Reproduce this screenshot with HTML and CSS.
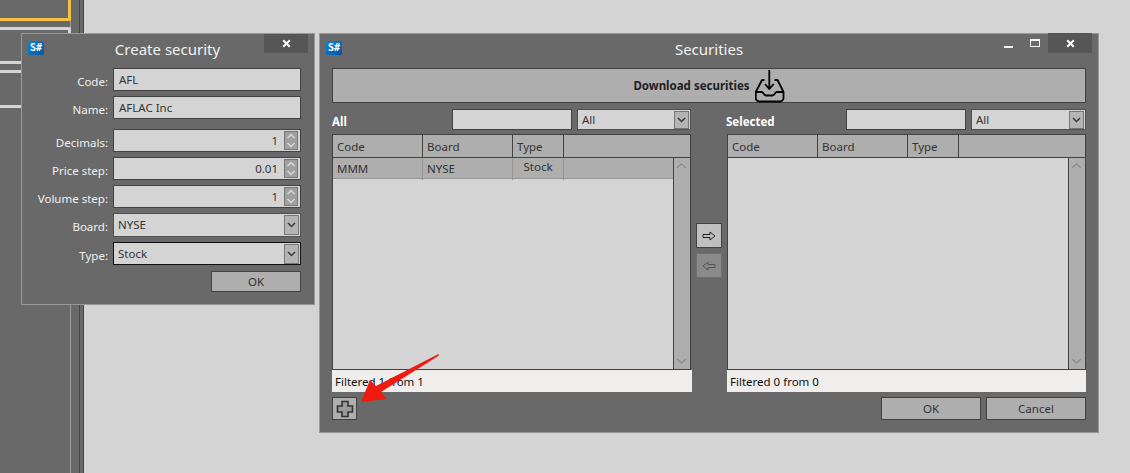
FILE: index.html
```html
<!DOCTYPE html>
<html lang="en">
<head>
<meta charset="utf-8">
<title>Securities</title>
<link rel="stylesheet" href="styles.css">
</head>
<body>
<div class="desktop">
  <aside class="sidebar">
    <div class="node node-active"></div>
    <div class="node node-plain"></div>
    <div class="wire wire-a"></div>
    <div class="wire wire-b"></div>
    <div class="wire wire-c"></div>
  </aside>

  <section class="window create">
    <header class="titlebar">
      <span class="appicon">S#</span>
      <h1 class="title">Create security</h1>
      <span class="winbtn close-small"><svg width="9" height="9" viewBox="0 0 9 9"><path d="M1.200 1.200 7.800 7.800M7.800 1.200 1.200 7.800"/></svg></span>
    </header>
    <div class="form">
      <div class="frow"><label>Code:</label><div class="field text">AFL</div></div>
      <div class="frow"><label>Name:</label><div class="field text">AFLAC Inc</div></div>
      <div class="frow gap-top"><label>Decimals:</label><div class="field num"><span>1</span><span class="spin"><svg width="12" height="17" viewBox="0 0 12 17"><path class="chev" d="M2.500 6 6 2.500 9.500 6M2.500 11 6 14.500 9.500 11"/></svg></span></div></div>
      <div class="frow"><label>Price step:</label><div class="field num"><span>0.01</span><span class="spin"><svg width="12" height="17" viewBox="0 0 12 17"><path class="chev" d="M2.500 6 6 2.500 9.500 6M2.500 11 6 14.500 9.500 11"/></svg></span></div></div>
      <div class="frow"><label>Volume step:</label><div class="field num"><span>1</span><span class="spin"><svg width="12" height="17" viewBox="0 0 12 17"><path class="chev" d="M2.500 6 6 2.500 9.500 6M2.500 11 6 14.500 9.500 11"/></svg></span></div></div>
      <div class="frow tall"><label>Board:</label><div class="field combo"><span>NYSE</span><span class="drop"><svg width="11" height="8" viewBox="0 0 11 8"><path class="chev" d="M2 2 5.500 5.500 9 2"/></svg></span></div></div>
      <div class="frow"><label>Type:</label><div class="field combo focused"><span>Stock</span><span class="drop"><svg width="11" height="8" viewBox="0 0 11 8"><path class="chev" d="M2 2 5.500 5.500 9 2"/></svg></span></div></div>
      <div class="form-actions"><button class="btn btn-form">OK</button></div>
    </div>
  </section>

  <section class="window securities">
    <header class="titlebar">
      <span class="appicon">S#</span>
      <h1 class="title">Securities</h1>
      <div class="controls">
        <span class="ctl"><i class="min"></i></span>
        <span class="ctl"><i class="max"></i></span>
        <span class="winbtn close-large"><svg width="9" height="9" viewBox="0 0 9 9"><path d="M1.200 1.200 7.800 7.800M7.800 1.200 1.200 7.800"/></svg></span>
      </div>
    </header>
    <div class="content">
      <button class="download">
        <b>Download securities</b>
        <svg class="inbox" width="30" height="34" viewBox="0 0 30 34"><path d="M9.500 11H7L.8 23v6a3.500 3.500 0 0 0 3.500 3.500H25a3.500 3.500 0 0 0 3.500-3.500V23L22.500 11H19.500M.8 23H7c1 0 2 3.500 4 3.500h6.500c2 0 3-3.500 4-3.500h7M14.300 1v19M10 15l4.300 5 4.400-5"/></svg>
      </button>
      <div class="panes">
        <div class="pane">
          <div class="filter">
            <strong>All</strong>
            <div class="field search"></div>
            <div class="field combo small"><span>All</span><span class="drop"><svg width="11" height="8" viewBox="0 0 11 8"><path class="chev" d="M2 2 5.500 5.500 9 2"/></svg></span></div>
          </div>
          <div class="table">
            <div class="thead"><span>Code</span><span>Board</span><span>Type</span><span></span></div>
            <div class="tbody">
              <div class="rows">
                <div class="trow"><span>MMM</span><span>NYSE</span><span class="type">Stock</span><span></span></div>
              </div>
              <div class="scroll"><svg width="17" height="10" viewBox="0 0 17 10"><path class="chev faint" d="M4 7 8.500 3 13 7"/></svg><svg width="17" height="10" viewBox="0 0 17 10"><path class="chev faint" d="M4 3 8.500 7 13 3"/></svg></div>
            </div>
          </div>
          <div class="status">Filtered 1 from 1</div>
          <div class="pane-foot">
            <button class="btn plus"><svg width="18" height="18" viewBox="0 0 18 18"><path d="M6 1.500h6v4.500h4.500v6H12v4.500H6V12H1.500V6H6Z"/></svg></button>
          </div>
        </div>

        <div class="movers">
          <button class="btn move"><svg width="14" height="10" viewBox="0 0 14 10"><path d="M1 3.500h7V1l5 4-5 4V6.500H1Z"/></svg></button>
          <button class="btn move off"><svg width="14" height="10" viewBox="0 0 14 10"><path d="M13 3.500H6V1L1 5l5 4V6.500h7Z"/></svg></button>
        </div>

        <div class="pane pane-right">
          <div class="filter">
            <strong>Selected</strong>
            <div class="field search"></div>
            <div class="field combo small"><span>All</span><span class="drop"><svg width="11" height="8" viewBox="0 0 11 8"><path class="chev" d="M2 2 5.500 5.500 9 2"/></svg></span></div>
          </div>
          <div class="table">
            <div class="thead"><span>Code</span><span>Board</span><span>Type</span><span></span></div>
            <div class="tbody">
              <div class="rows"></div>
              <div class="scroll"><svg width="17" height="10" viewBox="0 0 17 10"><path class="chev faint" d="M4 7 8.500 3 13 7"/></svg><svg width="17" height="10" viewBox="0 0 17 10"><path class="chev faint" d="M4 3 8.500 7 13 3"/></svg></div>
            </div>
          </div>
          <div class="status">Filtered 0 from 0</div>
          <div class="pane-foot end">
            <button class="btn wide">OK</button>
            <button class="btn wide">Cancel</button>
          </div>
        </div>
      </div>
    </div>
  </section>

  <svg class="pointer" width="1130" height="473" viewBox="0 0 1130 473"><polygon points="438.500,354 439,355.500 381,392 386.700,399 361,402 370,380 376,386"/></svg>
</div>
</body>
</html>
```

FILE: styles.css
```css
* { box-sizing: border-box; }
html, body { margin: 0; height: 100%; overflow: hidden; }
body { font: 11.5px "Noto Sans", "Open Sans", sans-serif; color: #333; background: #d4d4d4; }
.desktop { position: relative; width: 1130px; height: 473px; }

.sidebar {
  position: relative;
  width: 84px;
  height: 473px;
  background: #696969;
}
.sidebar::before, .sidebar::after { content: ""; position: absolute; top: 0; bottom: 0; }
.sidebar::before { left: 70px; width: 8px; border-left: 1px solid #9b9b9b; border-right: 1px solid #474747; }
.sidebar::after { left: 83px; width: 1px; background: #474747; }
.node { position: absolute; left: 0; width: 71px; z-index: 1; background: #696969; }
.node-active { top: 0; height: 21px; border: solid #f5c244; border-width: 0 3px 3px 0; border-bottom-right-radius: 2px; }
.node-plain { top: 27px; height: 30px; border: solid #d4d4d4; border-width: 3px 3px 0 0; border-top-right-radius: 2px; }
.wire { position: absolute; left: 0; width: 22px; height: 3px; background: #d4d4d4; z-index: 1; }
.wire-a { top: 61px; }
.wire-b { top: 70px; }
.wire-c { top: 105px; }

.window {
  position: absolute;
  z-index: 2;
  background: #696969;
  border: 1px solid #999;
  display: flex;
  flex-direction: column;
}
.create { left: 21px; top: 33px; width: 294px; height: 272px; }
.securities { left: 319px; top: 33px; width: 780px; height: 400px; }

.titlebar { position: relative; height: 34px; flex: none; }
.title {
  margin: 0;
  text-align: center;
  font-size: 15px;
  font-weight: 400;
  line-height: 30px;
  color: #f2f2f2;
}
.create .title { padding-right: 1px; }
.appicon {
  position: absolute;
  left: 6px;
  top: 7px;
  width: 16px;
  height: 14px;
  border-radius: 2px;
  background: linear-gradient(135deg, #0a8ad8, #0c4f9c);
  color: #fff;
  font: 700 10px/14px "DejaVu Sans Mono", monospace;
  text-align: center;
}
.winbtn {
  position: absolute;
  top: 0;
  width: 44px;
  height: 19px;
  background: #565656;
  display: flex;
  align-items: center;
  justify-content: center;
}
.winbtn path { fill: none; stroke: #fff; stroke-width: 2; }
.close-small { left: 242px; }
.controls { position: absolute; inset: 0; }
.close-large { left: 728px; height: 20px; top: -1px; }
.ctl { position: absolute; display: block; }
.ctl:nth-child(1) { left: 684px; top: 12px; }
.ctl:nth-child(2) { left: 710px; top: 5px; }
.min { display: block; width: 9px; height: 2px; background: #f4f4f4; }
.max { display: block; width: 10px; height: 8px; background: #696969; border: 1px solid #f4f4f4; border-top-width: 2px; }

.form { display: flex; flex-direction: column; gap: 5px; padding-left: 91px; }
.frow { position: relative; height: 23px; width: 188px; }
.frow.tall { height: 24px; }
.frow.gap-top { margin-top: 5px; }
.frow label {
  position: absolute;
  right: 193px;
  top: 4px;
  white-space: nowrap;
  color: #f0f0f0;
  line-height: 20px;
}

.field {
  height: 100%;
  background: #d4d4d4;
  border: 1px solid #424242;
  color: #333;
  display: flex;
  align-items: center;
  line-height: 18px;
}
.field.text { padding-left: 5px; }
.field.num { justify-content: flex-end; padding-right: 2px; gap: 6px; }
.field.combo { justify-content: space-between; padding: 0 1px 0 4px; border-color: #505050; }
.field.focused { border-color: #111; }
.spin {
  display: flex;
  align-items: center;
  justify-content: center;
  width: 14px;
  height: 19px;
  background: #a0a0a0;
  border: 1px solid #777;
}
.drop {
  display: flex;
  align-items: center;
  justify-content: center;
  width: 15px;
  height: 20px;
  background: #b4b4b4;
  border: 1px solid #777;
}
.chev { fill: none; stroke: #3a3a3a; stroke-width: 1.500; }
.chev.faint { stroke: #8e8e8e; }
.spin .chev { stroke: #d8d8d8; }

.form-actions { display: flex; justify-content: flex-end; margin-top: 1px; width: 188px; }
.btn {
  font: inherit;
  color: #333;
  background: #aeaeae;
  border: 1px solid #424242;
  padding: 0;
  display: flex;
  align-items: center;
  justify-content: center;
}
.btn-form { width: 90px; height: 21px; }

.content { padding: 0 12px; display: flex; flex-direction: column; }
.download {
  height: 35px;
  width: 754px;
  font: inherit;
  color: #222;
  background: #aeaeae;
  border: 1px solid #424242;
  display: flex;
  align-items: center;
  justify-content: center;
  gap: 5px;
  padding: 0;
}
.inbox { fill: none; stroke: #000; stroke-width: 1.800; stroke-linejoin: round; }
.panes { display: flex; margin-top: 6px; }
.pane { width: 360px; flex: none; display: flex; flex-direction: column; }
.pane-right { width: 359px; }
.movers { width: 35px; flex: none; padding: 114px 0 0 4px; display: flex; flex-direction: column; gap: 5px; }

.filter { display: flex; width: 359px; height: 21px; align-items: stretch; }
.filter strong { flex: 1; color: #fff; line-height: 25px; font-size: 11.5px; }
.pane-right .filter strong { margin-left: -1px; }
.field.search { width: 120px; flex: none; }
.field.small { width: 114px; flex: none; margin-left: 5px; }
.pane-right .field.small { width: 115px; }
.small .drop { height: 18px; }

.table {
  margin-top: 4px;
  width: 359px;
  height: 236px;
  border: 1px solid #424242;
  display: flex;
  flex-direction: column;
  background: #d4d4d4;
}
.thead, .trow { display: grid; grid-template-columns: 90px 90px 51px 1fr; }
.thead { height: 23px; flex: none; background: #aeaeae; border-bottom: 1px solid #424242; }
.thead span { border-right: 1px solid #424242; padding-left: 4px; line-height: 23px; }
.thead span:last-child { border-right: 0; }
.tbody { flex: 1; display: flex; min-height: 0; }
.rows { flex: 1; }
.trow { height: 21px; background: #aeaeae; border-bottom: 1px solid #969696; }
.trow span { border-right: 1px solid #969696; padding-left: 4px; line-height: 22px; }
.trow span:last-child { border-right: 0; }
.trow .type { padding-left: 0; text-align: center; line-height: 18px; }
.scroll {
  width: 17px;
  flex: none;
  background: #aeaeae;
  border-left: 1px solid #424242;
  display: flex;
  flex-direction: column;
  justify-content: space-between;
  padding: 3px 0;
}
.scroll svg { margin-left: -1px; }

.status { height: 22px; background: #f0eded; color: #111; line-height: 23px; padding-left: 3px; }
.pane-foot { display: flex; margin-top: 5px; }
.pane-foot.end { justify-content: flex-end; gap: 5px; }
.plus { width: 25px; height: 23px; }
.plus path { fill: #9a9a9a; stroke: #333; stroke-width: 1.600; }
.wide { width: 100px; height: 23px; }
.move { width: 26px; height: 25px; background: #c0c0c0; }
.move path { fill: none; stroke: #222; stroke-width: 1; }
.move.off { background: #8a8a8a; border-color: #6f6f6f; }
.move.off path { stroke: #555; }

.pointer { position: absolute; left: 0; top: 0; z-index: 3; pointer-events: none; }
.pointer polygon { fill: #ee1b0e; }
```
